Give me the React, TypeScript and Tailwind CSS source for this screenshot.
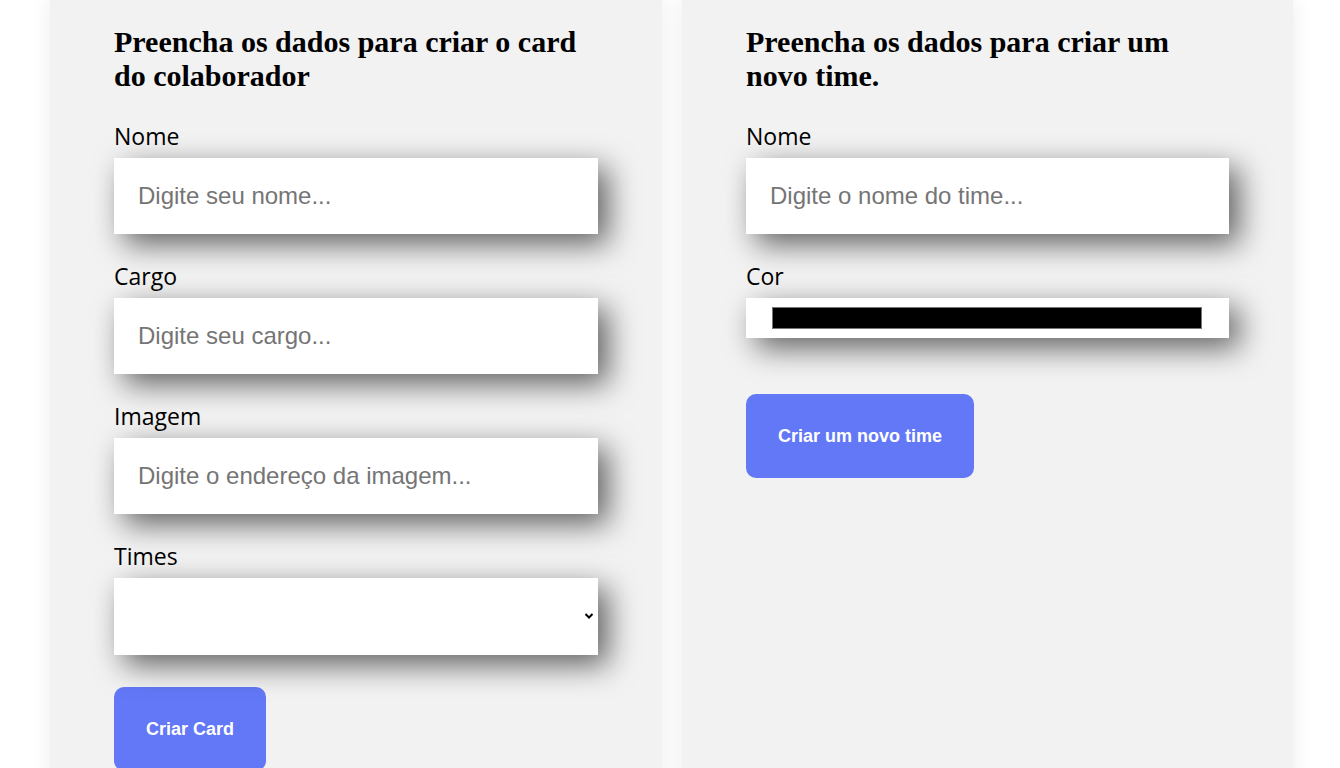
import React from "react";

const labelCls =
  "block text-[23px] leading-9 text-black mb-1 font-['Open_Sans',sans-serif]";
const inputCls =
  "block w-full bg-white p-6 text-[24px] leading-7 font-['Liberation_Sans',Arial,sans-serif] text-black placeholder:text-[#757575] outline-none border-0 shadow-[10px_10px_30px_rgba(0,0,0,0.6)]";
const headingCls =
  "text-[30px] leading-[34px] font-bold text-black font-['Liberation_Serif','Times_New_Roman',serif] mb-[25px]";
const buttonCls =
  "bg-[#6278F7] rounded-[10px] px-8 py-8 text-white font-bold text-[18px] leading-5 font-['Liberation_Sans',Arial,sans-serif]";

function Field({ label, placeholder }: { label: string; placeholder: string }) {
  return (
    <div className="mb-6">
      <label className={labelCls}>{label}</label>
      <input className={inputCls} placeholder={placeholder} />
    </div>
  );
}

export default function App() {
  return (
    <div className="min-h-[768px] bg-white flex gap-5 pl-[50px] overflow-hidden">
      <div className="w-[612px] bg-[#f2f2f2] px-16 pt-[25px] pb-10 shadow-[0_0_20px_rgba(0,0,0,0.08)] shrink-0">
        <h2 className={headingCls}>
          Preencha os dados para criar o card do colaborador
        </h2>
        <Field label="Nome" placeholder="Digite seu nome..." />
        <Field label="Cargo" placeholder="Digite seu cargo..." />
        <Field label="Imagem" placeholder="Digite o endereço da imagem..." />
        <div>
          <label className={labelCls}>Times</label>
          <div className="relative w-full h-[77px] bg-white shadow-[10px_10px_30px_rgba(0,0,0,0.6)]">
            <svg
              className="absolute right-[4px] top-[34px]"
              width="10"
              height="8"
              viewBox="0 0 10 8"
            >
              <path d="M1.5 2 L5 5.5 L8.5 2" stroke="#000" strokeWidth="2" fill="none" />
            </svg>
          </div>
        </div>
        <button className={`${buttonCls} mt-8`}>Criar Card</button>
      </div>
      <div className="w-[611px] bg-[#f2f2f2] px-16 pt-[25px] pb-10 shadow-[0_0_20px_rgba(0,0,0,0.08)] shrink-0">
        <h2 className={headingCls}>Preencha os dados para criar um novo time.</h2>
        <Field label="Nome" placeholder="Digite o nome do time..." />
        <div className="mb-6">
          <label className={labelCls}>Cor</label>
          <div className="w-full h-10 bg-white pl-[26px] pr-[27px] py-[9px] shadow-[10px_10px_30px_rgba(0,0,0,0.6)]">
            <div className="w-full h-full bg-black border border-[#767676]" />
          </div>
        </div>
        <button className={`${buttonCls} mt-8`}>Criar um novo time</button>
      </div>
    </div>
  );
}
